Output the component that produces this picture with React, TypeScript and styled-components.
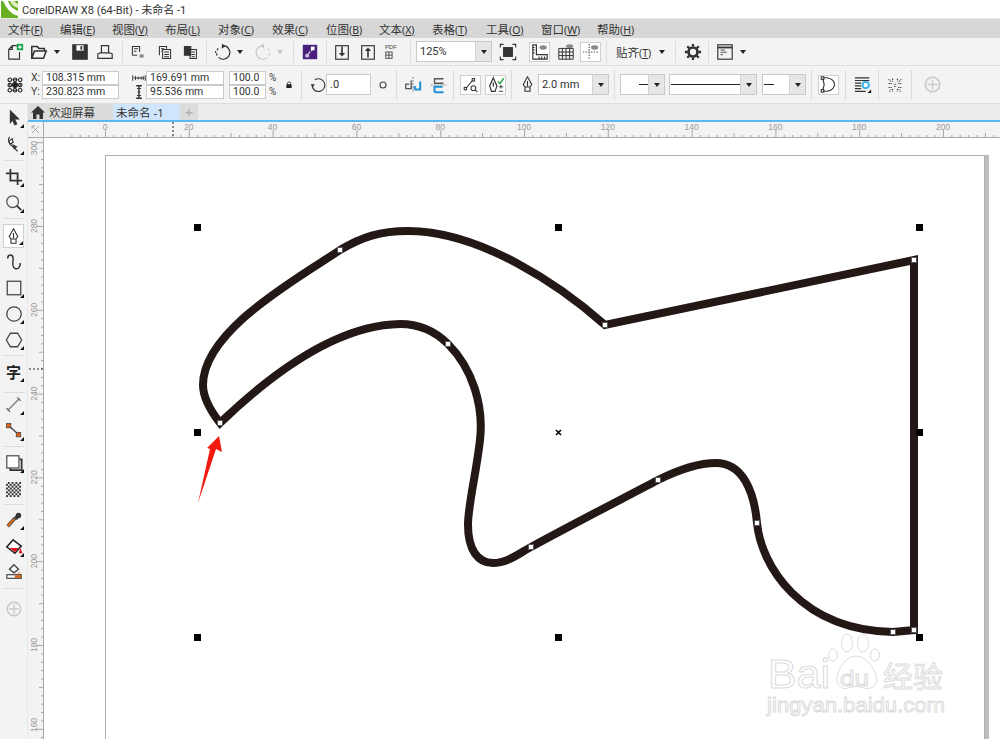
import React from "react";
import styled, { createGlobalStyle } from "styled-components";

const Global = createGlobalStyle`
  html, body { margin: 0; padding: 0; background: #fff; }
  body { font-family: "Noto Sans", "Noto Sans CJK SC", sans-serif; overflow: hidden; }
`;

const Shell = styled.div`
  width: 1000px; height: 739px; display: flex; flex-direction: column; overflow: hidden;
  font-family: "Noto Sans", "Noto Sans CJK SC", sans-serif; color: #333;
`;
const TitleBar = styled.div`
  height: 18px; display: flex; align-items: center; background: #fff; flex: none;
  font-family: Roboto, "Noto Sans CJK SC", sans-serif; font-size: 11px; color: #333; gap: 4px; padding-left: 1px;
`;
const MenuBar = styled.div`
  height: 20px; display: flex; align-items: center; background: #d7d7d7; flex: none;
  padding-left: 8px; font-size: 11.5px; color: #333; border-top: 1px solid #e9e9e9; box-sizing: border-box;
`;
const MenuItem = styled.span<{ $w: number }>`
  width: ${p => p.$w}px; flex: none; white-space: nowrap;
  u { text-decoration: underline; text-underline-offset: 1px; font-size: 10.5px; }
`;
const Bar = styled.div<{ $h: number }>`
  height: ${p => p.$h}px; flex: none; display: flex; align-items: center; background: #f3f3f3;
  border-bottom: 1px solid #dedede; box-sizing: border-box;
`;
const Slot = styled.span<{ $w: number; $l?: number; $on?: boolean }>`
  width: ${p => p.$w}px; margin-left: ${p => p.$l ?? 0}px; flex: none; display: flex; align-items: center; justify-content: center;
  height: 20px; box-sizing: border-box; background: ${p => (p.$on ? "#fff" : "transparent")};
  border: ${p => (p.$on ? "1px solid #cfcfcf" : "none")};
`;
const Sep = styled.span<{ $l: number }>`
  width: 1px; height: 22px; margin-left: ${p => p.$l}px; margin-right: 0; background: #dcdcdc; flex: none;
`;
const Tall = styled(Sep)`height: 30px;`;
const Caret = styled.span`
  width: 0; height: 0; border-left: 3.5px solid transparent; border-right: 3.5px solid transparent; border-top: 4px solid #222;
`;
const FaintCaret = styled(Caret)`border-top-color: #c4c4c4;`;
const ComboBox = styled.span<{ $w: number; $l: number }>`
  width: ${p => p.$w}px; margin-left: ${p => p.$l}px; height: 21px; flex: none; box-sizing: border-box; display: flex;
  background: #fff; border: 1px solid #c9c9c9; font-family: Roboto, sans-serif; font-size: 11px; color: #333;
`;
const ComboValue = styled.span`
  flex: 1; display: flex; align-items: center; padding-left: 3px; overflow: hidden; position: relative; white-space: nowrap;
`;
const ComboArrow = styled.span`
  width: 15px; flex: none; background: #e6e6e6; display: flex; align-items: center; justify-content: center; border-left: 1px solid #d2d2d2;
`;
const LineSample = styled.span<{ $w: number; $ml: number }>`
  display: block; height: 1.5px; width: ${p => p.$w}px; margin-left: ${p => p.$ml}px; background: #222; flex: none;
`;
const SnapText = styled.span<{ $w: number; $l: number }>`
  width: ${p => p.$w}px; margin-left: ${p => p.$l}px; flex: none; font-size: 11.5px; white-space: nowrap; color: #333;
  u { font-size: 10.5px; }
`;
const Stack = styled.span<{ $l: number }>`
  margin-left: ${p => p.$l}px; flex: none; display: flex; flex-direction: column; gap: 1px;
`;
const StackRow = styled.span`
  display: flex; align-items: center; height: 13px;
`;
const Axis = styled.span`
  width: 11px; font-family: Roboto, sans-serif; font-size: 10.5px; color: #444; flex: none; line-height: 13px;
`;
const Field = styled.span<{ $w: number }>`
  width: ${p => p.$w}px; height: 14px; box-sizing: border-box; background: #fff; border: 1px solid #cbcbcb; flex: none;
  font-family: Roboto, sans-serif; font-size: 10.5px; line-height: 12px; padding-left: 3px; color: #333; white-space: nowrap; overflow: hidden;
`;
const Percent = styled.span`
  width: 9px; font-family: Roboto, sans-serif; font-size: 10px; margin-left: 3px; color: #444; line-height: 13px; flex: none;
`;
const RotField = styled.span`
  width: 45px; height: 21px; flex: none; box-sizing: border-box; background: #fff; border: 1px solid #cbcbcb;
  font-family: Roboto, sans-serif; font-size: 11px; line-height: 19px; padding-left: 3px;
`;
const Body = styled.div`
  flex: 1; display: flex; min-height: 0;
`;
const Toolbox = styled.div`
  width: 28px; flex: none; background: #f3f3f3; display: flex; flex-direction: column; align-items: center;
  border-right: 1px solid #e8e8e8; box-sizing: border-box;
`;
const Tool = styled.span<{ $t: number; $on?: boolean }>`
  width: 21px; height: 24px; margin-top: ${p => p.$t}px; position: relative; display: flex; align-items: center; justify-content: center;
  box-sizing: border-box; background: ${p => (p.$on ? "#fff" : "transparent")}; border: ${p => (p.$on ? "1px solid #cfcfcf" : "none")};
`;
const Flyout = styled.span`
  position: absolute; right: 0; bottom: 2px; width: 0; height: 0;
  border-left: 4px solid transparent; border-bottom: 4px solid #111;
`;
const ToolSep = styled.span<{ $t: number }>`
  width: 20px; height: 1px; background: #dcdcdc; margin-top: ${p => p.$t}px; flex: none;
`;
const TextTool = styled.span`
  font-size: 15px; font-weight: 700; color: #222; line-height: 1;
`;
const Work = styled.div`
  flex: 1; display: flex; flex-direction: column; min-width: 0;
`;
const TabRow = styled.div`
  height: 16px; flex: none; display: flex; background: #ececec; border-bottom: 2px solid #5cb8ee; box-sizing: content-box; font-size: 11.5px;
`;
const Tab = styled.span<{ $w: number; $bg: string }>`
  width: ${p => p.$w}px; background: ${p => p.$bg}; display: flex; align-items: center; gap: 4px; flex: none; box-sizing: border-box; padding-left: 3px;
  white-space: nowrap; color: #333;
`;
const AddTab = styled(Tab)`
  justify-content: center; padding: 0; color: #b5b5b5; font-size: 15px; font-weight: 700;
`;
const RulerRow = styled.div`
  height: 16px; flex: none; display: flex; background: #f3f3f3;
`;
const Corner = styled.div`
  width: 16px; flex: none; border-bottom: 1px solid #aaa; border-right: 1px solid #aaa; box-sizing: border-box; display: flex; align-items: center; justify-content: center;
`;
const HRuler = styled.svg`
  flex: 1; height: 16px; display: block;
`;
const Stage = styled.div`
  flex: 1; display: flex; min-height: 0;
`;
const VRuler = styled.svg`
  width: 16px; flex: none; height: 601px; display: block; background: #f3f3f3;
`;
const Canvas = styled.div`
  flex: 1; position: relative; background: #fff; overflow: hidden;
`;
const Page = styled.div`
  position: absolute; left: 61px; top: 17px; width: 880px; height: 700px; background: #fff; box-sizing: border-box;
  border: 1px solid #b0b0b0; box-shadow: 4px 0 0 #bdbdbd;
`;
const Drawing = styled.svg`
  position: absolute; left: 0; top: 0; width: 956px; height: 601px; display: block;
`;
const RulerLabel = styled.text`
  font-family: "Liberation Sans", sans-serif; font-size: 8.5px; fill: #9a9a9a;
`;
const Mark = styled.text<{ $size: number; $w?: number }>`
  font-family: "Liberation Sans", "Noto Sans CJK SC", sans-serif; font-weight: ${p => p.$w ?? 400}; font-size: ${p => p.$size}px;
  fill: #fff; stroke: #dcdcdc; stroke-width: 1;
`;
const PdfLabel = styled.text`
  font-family: "Liberation Sans", sans-serif; font-size: 6.5px; fill: #444;
`;

type IP = { s?: number; children: React.ReactNode };
const Ic = ({ s = 18, children }: IP) => (
  <svg width={s} height={s} viewBox="0 0 20 20" fill="none" stroke="#333" strokeWidth={1.3}>{children}</svg>
);

const NewIcon = () => <Ic><path d="M3 7 L7 3 H13 M3 7 V18 H15 V10 M3 7 H7 V3" /><rect x="12" y="1" width="7" height="7" fill="#17a34a" stroke="none" /><path d="M15.5 2.5 V6.5 M13.5 4.5 H17.5" stroke="#fff" /></Ic>;
const OpenIcon = () => <Ic><path d="M2 17 V4 H8 L10 6 H16 V9 H5 L2 17 H15 L18 9 H16" strokeWidth={1.7} /></Ic>;
const SaveIcon = () => <Ic><path d="M2 2 H18 V18 H2 Z" fill="#333" /><rect x="6" y="2.5" width="8" height="6" fill="#fff" stroke="none" /><rect x="10.5" y="3.5" width="2" height="4" fill="#333" stroke="none" /></Ic>;
const PrintIcon = () => <Ic><path d="M6 11 V3 H14 V11 M2 17 V12 L5 11 H15 L18 12 V17 Z" /></Ic>;
const Doc1 = () => <Ic s={16}><path d="M3 14 V3 H12 V10 M3 14 H9" /><path d="M5 6 H10 M5 9 H8" /><rect x="12" y="13" width="5" height="4" fill="#888" stroke="none" /></Ic>;
const Doc2 = () => <Ic s={16}><path d="M3 14 V3 H12 V6 M7 7 H17 V18 H7 Z M9 10 H15 M9 13 H15 M9 16 H15 M5 6 H9 M5 9 H6" /></Ic>;
const Doc3 = () => <Ic s={16}><path d="M3 3 H11 V14 H3 Z" fill="#333" /><path d="M10 7 H18 V18 H10 Z M12 10 H16 M12 13 H16 M12 16 H16" /></Ic>;
const UndoIcon = () => <Ic><path d="M10 3 A7.5 7.5 0 1 1 5 16" /><path d="M3 14 V11.5 M3.5 8 L4.5 6 M1.5 11 L2 9" strokeWidth={1.4} /><path d="M9 0.5 L12.5 3.5 L8.5 6.5 Z" fill="#333" stroke="none" /></Ic>;
const RedoIcon = () => <Ic><g stroke="#c9c9c9"><path d="M10 3 A7.5 7.5 0 1 0 15 16" /><path d="M17 14 V11.5 M16.5 8 L15.5 6" strokeWidth={1.4} /><path d="M11 0.5 L7.5 3.5 L11.5 6.5 Z" fill="#c9c9c9" stroke="none" /></g></Ic>;
const PurpleIcon = () => <Ic><rect x="2" y="2" width="16" height="16" fill="#4a1f7c" stroke="none" /><path d="M5 15 L15 5" stroke="#fff" strokeWidth={1.2} strokeDasharray="3 1.5" /><rect x="11" y="4" width="4" height="4" fill="#fff" stroke="none" /><rect x="5" y="12" width="4" height="4" fill="#cbbbe0" stroke="none" /></Ic>;
const ImportIcon = () => <Ic><rect x="3" y="3" width="14" height="15" /><path d="M10 4 V13" strokeWidth={1.8} /><path d="M6.5 11 H13.5 L10 15 Z" fill="#333" stroke="none" /></Ic>;
const ExportIcon = () => <Ic><rect x="3" y="3" width="14" height="15" /><path d="M10 8 V16" strokeWidth={1.8} /><path d="M6.5 9 H13.5 L10 5 Z" fill="#333" stroke="none" /></Ic>;
const PdfIcon = () => <svg width="18" height="18" viewBox="0 0 20 20" fill="none" stroke="#444"><PdfLabel x="1" y="7" stroke="none">PDF</PdfLabel><rect x="2" y="10" width="7" height="7" /><path d="M5.5 10 V17 M2 13.5 H9" /></svg>;
const FullIcon = () => <Ic><rect x="4.5" y="4.5" width="11" height="11" fill="#333" stroke="none" /><path d="M1.5 5 V1.5 H5 M15 1.5 H18.5 V5 M18.5 15 V18.5 H15 M5 18.5 H1.5 V15" /></Ic>;
const RulerEye = () => <Ic><path d="M2 2 H6 V13 H18 V18 H2 Z M2 5 H4 M2 8 H4 M2 11 H4 M9 15 V18 M12 15 V18 M15 15 V18" /><ellipse cx="13.5" cy="5" rx="4" ry="2.5" fill="#888" stroke="none" /></Ic>;
const GridEye = () => <Ic><path d="M2 6 H18 V18 H2 Z M2 10 H18 M2 14 H18 M6 6 V18 M10 6 V18 M14 6 V18" strokeWidth={1.1} /><ellipse cx="14" cy="3.5" rx="4" ry="2" fill="#888" stroke="none" /></Ic>;
const GuideEye = () => <Ic><path d="M8 1 V19 M1 10 H19" strokeDasharray="1.5 1.5" stroke="#555" /><ellipse cx="14" cy="5" rx="4" ry="2.5" fill="#888" stroke="none" /></Ic>;
const GearIcon = () => <Ic><circle cx="10" cy="10" r="5" strokeWidth={3} /><path d="M10 1 V4 M10 16 V19 M1 10 H4 M16 10 H19 M3.6 3.6 L5.8 5.8 M14.2 14.2 L16.4 16.4 M3.6 16.4 L5.8 14.2 M14.2 5.8 L16.4 3.6" strokeWidth={2.6} /></Ic>;
const WindowIcon = () => <Ic><rect x="2" y="2" width="16" height="16" /><path d="M2 5 H18" strokeWidth={2} /><path d="M5 8 H10 M5 10.5 H12 M5 13 H8" stroke="#777" /></Ic>;
const AnchorIcon = () => <Ic s={16}>{[2, 10, 18].flatMap(x => [2, 10, 18].map(y => <circle key={`${x}${y}`} cx={x > 10 ? 16.5 : x < 10 ? 3.5 : 10} cy={y > 10 ? 16.5 : y < 10 ? 3.5 : 10} r={x === 10 && y === 10 ? 3 : 2.2} fill={x === 10 && y === 10 ? "#222" : "none"} stroke="#222" strokeWidth={1.4} />))}<path d="M3.5 7 V13 M16.5 7 V13 M7 3.5 H13 M7 16.5 H13" stroke="#222" strokeWidth={1.2} /></Ic>;
const WidthIcon = () => <Ic s={14}><path d="M1 6 V14 M19 6 V14 M2 10 H18" /><path d="M5 7 V13 M9 8 V12 M13 8 V12 M16 7 V13" /></Ic>;
const HeightIcon = () => <Ic s={14}><path d="M6 1 H14 M6 19 H14 M10 2 V18" strokeWidth={2} /><path d="M7 5 H13 M7 15 H13 M8 10 H12" /></Ic>;
const LockIcon = () => <svg width="6" height="8" viewBox="0 0 8 9"><rect x="0.5" y="3.5" width="7" height="5" fill="#222" /><path d="M2 4 V2 A2 1.6 0 0 1 6 2 V4" fill="none" stroke="#222" /></svg>;
const RotateIcon = () => <Ic s={16}><path d="M6 3.5 A8 8 0 1 1 2.5 10" /><path d="M1 9 H6 L3.5 13 Z" fill="#333" stroke="none" /></Ic>;
const DegreeIcon = () => <svg width="8" height="8" viewBox="0 0 8 8"><circle cx="4" cy="4" r="3" fill="none" stroke="#444" strokeWidth="1.1" /></svg>;
const MirrorH = () => <Ic><path d="M10 1 V19" stroke="#888" strokeDasharray="2 1.5" /><path d="M8 5 V14 H2 V9 H6" stroke="#555" strokeWidth={1.5} /><path d="M12 15 H18 V6 M12 15 V11" stroke="#1b8fd8" strokeWidth={2.2} /></Ic>;
const MirrorV = () => <Ic><path d="M1 10 H19" stroke="#888" strokeDasharray="2 1.5" /><path d="M15 8 H5 V3 H15" stroke="#555" strokeWidth={1.5} /><path d="M5 18 H15 M5 18 V12 H14" stroke="#1b8fd8" strokeWidth={2.2} /></Ic>;
const NodeFind = () => <Ic s={16}><path d="M3 15 L13 3" /><rect x="1.5" y="13" width="3" height="3" fill="#fff" /><rect x="11.5" y="2" width="3" height="3" fill="#fff" /><circle cx="13" cy="14" r="3" /><path d="M15 16 L18 19" /></Ic>;
const PenCheck = () => <Ic s={18}><path d="M7 2 L11 11 L9 17 H5 L3 11 Z M7 7 V12" /><path d="M12 6 L14.5 8.5 L18.5 2.5" stroke="#2aa84a" strokeWidth={1.6} /><path d="M13 12 H18 M15.5 10 V14 M13 17 H18" strokeWidth={1} /></Ic>;
const PenIcon = () => <Ic s={17}><path d="M10 1 L15 10 L13 13 H7 L5 10 Z M10 6 V12 M7 13 H13 V18 H7 Z" fill="none" /></Ic>;
const DIcon = () => <Ic s={17}><path d="M3 2 H8 C20 4 20 16 8 18 H3 L5 10 Z" /><rect x="1.5" y="1" width="3" height="3" fill="#fff" /><rect x="1.5" y="16" width="3" height="3" fill="#fff" /></Ic>;
const WrapIcon = () => <Ic><path d="M1 2 H17 M1 5 H17 M1 8 H8 M1 11 H8 M1 14 H8 M1 17 H13" /><circle cx="13" cy="10" r="3.5" stroke="#32b0ee" strokeWidth={2} fill="#fff" /><path d="M19 15 V19 H15 Z" fill="#111" stroke="none" /></Ic>;
const BreakIcon = () => <Ic><path d="M2 8 H6 M14 8 H18 M2 13 H6 M14 13 H18 M7 2 V5.5 M13 2 V5.5 M7 15 V18 M13 15 V18 M2 3 L5 5.5 M18 3 L15 5.5 M3 18 L5.5 15.5 M17 18 L14.5 15.5" strokeDasharray="1.6 1" /><path d="M8.5 9 H11.5 M8.5 12 H11.5" stroke="#777" /></Ic>;
const PlusCircle = ({ s = 17 }: { s?: number }) => <Ic s={s}><circle cx="10" cy="10" r="8.5" stroke="#c9c9c9" strokeWidth={1.8} /><path d="M10 4 V16 M4 10 H16" stroke="#c9c9c9" strokeWidth={1.6} /></Ic>;
const HomeIcon = () => <svg width="14" height="13" viewBox="0 0 14 13"><path d="M7 0 L14 6.5 H12 V13 H8.5 V8.5 H5.5 V13 H2 V6.5 H0 Z" fill="#333" /></svg>;
const LogoIcon = () => <svg width="17" height="17" viewBox="0 0 17 17"><rect width="17" height="17" fill="#6ab023" /><path d="M2 0 C6 8 10 13 17 15 V10 C12 8 9 5 7 0 Z" fill="#fff" /><path d="M9 0 C10 3 13 6 17 7 V3 C15 2 14 1 13 0 Z" fill="#dff0c8" /></svg>;

const SelectIcon = () => <Ic><path d="M6 2 L15 11 H10.5 L13 16.5 L10.8 17.5 L8.5 12 L6 15 Z" fill="#333" /></Ic>;
const ShapeIcon = () => <Ic><path d="M5 1 C2 6 6 10 9 12 L14 17" /><path d="M4 6 L8 3 L9 7 L6 9 Z" fill="#fff" /><path d="M8 9 L14 12 L10 15 Z" fill="#333" stroke="none" /></Ic>;
const CropIcon = () => <Ic><path d="M6 1 V14 H19 M1 6 H14 V19" strokeWidth={2} /></Ic>;
const ZoomIcon = () => <Ic><circle cx="8.5" cy="8.5" r="6.5" stroke="#555" strokeWidth={1.4} /><path d="M13 13 L18 18" strokeWidth={2} /></Ic>;
const FreeIcon = () => <Ic><path d="M3 6 C3 1 9 1 9 6 C9 11 7 15 11 17 C15 19 17 15 17 11" strokeWidth={1.6} /></Ic>;
const RectIcon = () => <Ic><rect x="2.5" y="2.5" width="15" height="15" stroke="#444" strokeWidth={1.4} /></Ic>;
const EllipseIcon = () => <Ic><circle cx="10" cy="10" r="8" stroke="#444" strokeWidth={1.4} /></Ic>;
const PolyIcon = () => <Ic><path d="M6 2.5 H14 L18.5 10 L14 17.5 H6 L1.5 10 Z" stroke="#444" strokeWidth={1.4} /></Ic>;
const DimIcon = () => <Ic><path d="M3 16 L16 3" stroke="#666" strokeWidth={1.3} /><path d="M1.5 13.5 L5.5 17.5 M13.5 1.5 L17.5 5.5" stroke="#666" /></Ic>;
const ConnIcon = () => <Ic><path d="M4 4 L15 14" stroke="#444" strokeWidth={1.5} /><rect x="1.5" y="1.5" width="5" height="5" fill="#d8641a" stroke="#444" strokeWidth={0.8} /><rect x="12.5" y="11.5" width="5" height="5" fill="#d8641a" stroke="#444" strokeWidth={0.8} /></Ic>;
const ShadowIcon = () => <Ic><path d="M6 15.5 V18 H18.5 V6 H16" strokeWidth={2} /><rect x="2" y="2" width="13.5" height="13.5" fill="#fff" stroke="#444" strokeWidth={1.3} /></Ic>;
const CheckIcon = () => <svg width="15" height="15" viewBox="0 0 16 16"><rect width="16" height="16" fill="#333" />{[0, 1, 2, 3, 4, 5, 6, 7].flatMap(x => [0, 1, 2, 3, 4, 5, 6, 7].map(y => ((x + y) % 2 === 0 ? <rect key={`${x}-${y}`} x={x * 2} y={y * 2} width="2" height="2" fill="#f3f3f3" /> : null)))}</svg>;
const DropperIcon = () => <Ic><path d="M3 17 L11 8" stroke="#555" strokeWidth={4} /><path d="M3 17 L10 9" stroke="#d8641a" strokeWidth={2.4} /><path d="M11 6 L14 9" stroke="#333" strokeWidth={3} /><circle cx="15" cy="5" r="3" fill="#333" stroke="none" /></Ic>;
const FillIcon = () => <Ic><path d="M9 2 L18 9 L11 17 L2 10 Z" stroke="#222" strokeWidth={1.7} fill="#fff" /><path d="M5 11 H15 L11 15.5 Z" fill="#e5101a" stroke="none" /><path d="M17 11 L19.5 17 H15.5 Z" fill="#e5101a" stroke="none" /></Ic>;
const SmartIcon = () => <Ic><path d="M10 2 L15 7 L10 11 L5 7 Z" stroke="#444" strokeWidth={1.5} fill="#fff" /><path d="M16 9 L18 12 H14 Z" fill="#f0b58a" stroke="none" /><rect x="2" y="13" width="16" height="4" fill="#fff" stroke="#444" /><rect x="11" y="13.5" width="7" height="3" fill="#d8641a" stroke="none" /></Ic>;

const Menu = ([["文件", "F", 52], ["编辑", "E", 52], ["视图", "V", 53], ["布局", "L", 53], ["对象", "C", 54], ["效果", "C", 54], ["位图", "B", 53], ["文本", "X", 53], ["表格", "T", 54], ["工具", "O", 55], ["窗口", "W", 56], ["帮助", "H", 50]] as [string, string, number][]);

const xOf = (v: number) => 105 + v * 4.19;
const yOf = (v: number) => 226 + (280 - v) * 4.19;
const range = (a: number, b: number, s: number) => { const r: number[] = []; for (let i = a; i <= b; i += s) r.push(i); return r; };

const CURVE = "M220 423 C270 375 335 325 400 324 C420 324 436 332 448 344 C472 368 484 405 480 440 C476 475 468 505 468 525 C468 550 478 563 493 563 C508 563 521 552 531 547 C575 523 620 500 658 480 C680 469 700 463 716 463 C742 463 754 490 757 523 C761 565 800 630 893 632 L914 630 L914 260 L605 325 C560 285 480 231 408 231 C380 231 362 237 340 250 C300 277 203 330 203 385 C203 398 210 410 220 423 Z";
const NODES = [[220, 423], [448, 344], [531, 547], [658, 480], [757, 523], [893, 632], [914, 630], [914, 260], [605, 325], [340, 250]];
const HANDLES = [[197, 227], [558, 227], [919, 227], [197, 432], [919, 432], [197, 637], [558, 637], [919, 637]];
const PAW = [[833, 655, 4.5, 6], [847, 643, 5.5, 9], [863, 643, 5.5, 9], [875, 655, 4.5, 6]];

const Under = ({ t, k }: { t: string; k: string }) => <>{t}<u>({k})</u></>;

export default function App() {
  return (
    <Shell>
      <Global />
      <TitleBar><LogoIcon />CorelDRAW X8 (64-Bit) - 未命名 -1</TitleBar>
      <MenuBar>
        {Menu.map(([t, k, w]) => <MenuItem key={t} $w={w}><Under t={t} k={k} /></MenuItem>)}
      </MenuBar>
      <Bar $h={28}>
        <Slot $w={20} $l={5}><NewIcon /></Slot>
        <Slot $w={20} $l={4}><OpenIcon /></Slot>
        <Slot $w={10} $l={3}><Caret /></Slot>
        <Slot $w={20} $l={8}><SaveIcon /></Slot>
        <Slot $w={20} $l={5}><PrintIcon /></Slot>
        <Sep $l={7} />
        <Slot $w={18} $l={6}><Doc1 /></Slot>
        <Slot $w={18} $l={9}><Doc2 /></Slot>
        <Slot $w={18} $l={7}><Doc3 /></Slot>
        <Sep $l={7} />
        <Slot $w={20} $l={6}><UndoIcon /></Slot>
        <Slot $w={10} $l={2}><Caret /></Slot>
        <Slot $w={20} $l={8}><RedoIcon /></Slot>
        <Slot $w={10} $l={2}><FaintCaret /></Slot>
        <Sep $l={8} />
        <Slot $w={18} $l={7}><PurpleIcon /></Slot>
        <Sep $l={7} />
        <Slot $w={18} $l={6}><ImportIcon /></Slot>
        <Slot $w={18} $l={8}><ExportIcon /></Slot>
        <Slot $w={18} $l={7}><PdfIcon /></Slot>
        <Sep $l={8} />
        <ComboBox $w={76} $l={5}><ComboValue>125%</ComboValue><ComboArrow><Caret /></ComboArrow></ComboBox>
        <Slot $w={20} $l={6}><FullIcon /></Slot>
        <Slot $w={21} $l={11} $on><RulerEye /></Slot>
        <Slot $w={20} $l={6}><GridEye /></Slot>
        <Slot $w={21} $l={4} $on><GuideEye /></Slot>
        <Sep $l={5} />
        <SnapText $w={38} $l={9}><Under t="贴齐" k="T" /></SnapText>
        <Slot $w={10} $l={3}><Caret /></Slot>
        <Sep $l={8} />
        <Slot $w={20} $l={7}><GearIcon /></Slot>
        <Sep $l={5} />
        <Slot $w={18} $l={7}><WindowIcon /></Slot>
        <Slot $w={10} $l={4}><Caret /></Slot>
      </Bar>
      <Bar $h={38}>
        <Slot $w={20} $l={5}><AnchorIcon /></Slot>
        <Stack $l={6}>
          <StackRow><Axis>X:</Axis><Field $w={77}>108.315 mm</Field></StackRow>
          <StackRow><Axis>Y:</Axis><Field $w={77}>230.823 mm</Field></StackRow>
        </Stack>
        <Stack $l={13}>
          <StackRow><Slot $w={14}><WidthIcon /></Slot><Field $w={78}>169.691 mm</Field></StackRow>
          <StackRow><Slot $w={14}><HeightIcon /></Slot><Field $w={78}>95.536 mm</Field></StackRow>
        </Stack>
        <Stack $l={5}>
          <StackRow><Field $w={37}>100.0</Field><Percent>%</Percent></StackRow>
          <StackRow><Field $w={37}>100.0</Field><Percent>%</Percent></StackRow>
        </Stack>
        <Slot $w={8} $l={7}><LockIcon /></Slot>
        <Tall $l={8} />
        <Slot $w={16} $l={8}><RotateIcon /></Slot>
        <RotField>.0</RotField>
        <Slot $w={8} $l={8}><DegreeIcon /></Slot>
        <Tall $l={9} />
        <Slot $w={18} $l={7}><MirrorH /></Slot>
        <Slot $w={18} $l={8}><MirrorV /></Slot>
        <Tall $l={5} />
        <Slot $w={21} $l={6} $on><NodeFind /></Slot>
        <Slot $w={21} $l={4} $on><PenCheck /></Slot>
        <Tall $l={5} />
        <Slot $w={17} $l={7}><PenIcon /></Slot>
        <ComboBox $w={71} $l={2}><ComboValue>2.0 mm</ComboValue><ComboArrow><Caret /></ComboArrow></ComboBox>
        <Tall $l={5} />
        <ComboBox $w={45} $l={5}><ComboValue><LineSample $w={10} $ml={15} /></ComboValue><ComboArrow><Caret /></ComboArrow></ComboBox>
        <ComboBox $w={88} $l={4}><ComboValue><LineSample $w={72} $ml={-2} /></ComboValue><ComboArrow><Caret /></ComboArrow></ComboBox>
        <ComboBox $w={44} $l={5}><ComboValue><LineSample $w={10} $ml={-2} /></ComboValue><ComboArrow><Caret /></ComboArrow></ComboBox>
        <Tall $l={5} />
        <Slot $w={21} $l={6} $on><DIcon /></Slot>
        <Tall $l={6} />
        <Slot $w={18} $l={8}><WrapIcon /></Slot>
        <Tall $l={6} />
        <Slot $w={16} $l={8}><BreakIcon /></Slot>
        <Tall $l={8} />
        <Slot $w={17} $l={12}><PlusCircle /></Slot>
      </Bar>
      <Body>
        <Toolbox>
          <Tool $t={2}><SelectIcon /><Flyout /></Tool>
          <Tool $t={3}><ShapeIcon /><Flyout /></Tool>
          <ToolSep $t={3} />
          <Tool $t={4}><CropIcon /><Flyout /></Tool>
          <Tool $t={2}><ZoomIcon /><Flyout /></Tool>
          <ToolSep $t={3} />
          <Tool $t={5} $on><PenIcon /><Flyout /></Tool>
          <Tool $t={2}><FreeIcon /></Tool>
          <Tool $t={2}><RectIcon /><Flyout /></Tool>
          <Tool $t={2}><EllipseIcon /><Flyout /></Tool>
          <Tool $t={2}><PolyIcon /><Flyout /></Tool>
          <ToolSep $t={3} />
          <Tool $t={4}><TextTool>字</TextTool><Flyout /></Tool>
          <ToolSep $t={8} />
          <Tool $t={0}><DimIcon /><Flyout /></Tool>
          <Tool $t={2}><ConnIcon /><Flyout /></Tool>
          <ToolSep $t={3} />
          <Tool $t={4}><ShadowIcon /><Flyout /></Tool>
          <Tool $t={2}><CheckIcon /></Tool>
          <ToolSep $t={3} />
          <Tool $t={3}><DropperIcon /><Flyout /></Tool>
          <Tool $t={3}><FillIcon /><Flyout /></Tool>
          <Tool $t={1}><SmartIcon /></Tool>
          <ToolSep $t={4} />
          <Tool $t={8}><PlusCircle s={16} /></Tool>
        </Toolbox>
        <Work>
          <TabRow>
            <Tab $w={85} $bg="#dcdcdc"><HomeIcon />欢迎屏幕</Tab>
            <Tab $w={67} $bg="#cfe5fb">未命名 -1</Tab>
            <AddTab $w={18} $bg="#dcdcdc">+</AddTab>
          </TabRow>
          <RulerRow>
            <Corner>
              <svg width="9" height="9" viewBox="0 0 9 9"><path d="M1 1 L8 8 M1 8 L8 1 M1 1 V4 M1 1 H4" stroke="#aaa" fill="none" /></svg>
            </Corner>
            <HRuler viewBox="44 122 956 16">
              <rect x="44" y="137" width="956" height="1" fill="#aaa" />
              {range(-8, 214, 2).map(v => (
                <rect key={v} x={xOf(v)} y={v % 20 === 0 ? 130 : v % 10 === 0 ? 133 : 135} width="1" height={v % 20 === 0 ? 7 : v % 10 === 0 ? 4 : 2} fill="#a8a8a8" />
              ))}
              {range(0, 200, 20).map(v => <RulerLabel key={v} x={xOf(v)} y="130" textAnchor="middle">{v}</RulerLabel>)}
              <path d="M173 122 V137" stroke="#222" strokeDasharray="2 2" />
            </HRuler>
          </RulerRow>
          <Stage>
            <VRuler viewBox="28 138 16 601">
              <rect x="43" y="138" width="1" height="601" fill="#aaa" />
              {range(156, 300, 2).map(v => (
                <rect key={v} x={v % 20 === 0 ? 36 : v % 10 === 0 ? 39 : 41} y={yOf(v)} width={v % 20 === 0 ? 7 : v % 10 === 0 ? 4 : 2} height="1" fill="#a8a8a8" />
              ))}
              {range(160, 300, 20).map(v => <RulerLabel key={v} transform={`translate(37 ${v === 300 ? yOf(v) + 6 : Math.min(yOf(v), 725)}) rotate(-90)`} textAnchor="middle">{v}</RulerLabel>)}
              <path d="M29 369 H43" stroke="#222" strokeDasharray="2 2" />
            </VRuler>
            <Canvas>
              <Page />
              <Drawing viewBox="44 138 956 601">
                <g>
                  {PAW.map(([x, y, rx, ry]) => <ellipse key={x} cx={x} cy={y} rx={rx} ry={ry} fill="#fff" stroke="#dcdcdc" />)}
                  <path d="M837 678 C838 668 846 656 856 656 C866 656 874 668 877 678 C878 686 870 690 864 688 C858 686 854 686 848 688 C842 690 836 686 837 678 Z" fill="#fff" stroke="#dcdcdc" />
                  <Mark $size={40} x="768" y="688" textLength="62" lengthAdjust="spacingAndGlyphs">Bai</Mark>
                  <Mark $size={22} x="840" y="686" textLength="29" lengthAdjust="spacingAndGlyphs">du</Mark>
                  <Mark $size={29} x="883" y="688" textLength="60" lengthAdjust="spacingAndGlyphs">经验</Mark>
                  <Mark $size={21} x="767" y="712" textLength="178" lengthAdjust="spacingAndGlyphs">jingyan.baidu.com</Mark>
                </g>
                <path d={CURVE} fill="none" stroke="#231815" strokeWidth="8" strokeLinejoin="miter" />
                {NODES.map(([x, y]) => <rect key={`${x}-${y}`} x={x - 2.5} y={y - 2.5} width="5" height="5" fill="#fff" stroke="#555" strokeWidth="1" shapeRendering="crispEdges" />)}
                {HANDLES.map(([x, y]) => <rect key={`${x}-${y}`} x={x - 3.5} y={y - 3.5} width="7" height="7" fill="#000" shapeRendering="crispEdges" />)}
                <path d="M556 430 L561 435 M561 430 L556 435" stroke="#000" strokeWidth="1.6" />
                <path d="M219 436 L222 452 L216 449 L198 503 L210 449 L207 448 Z" fill="#f5180f" />
              </Drawing>
            </Canvas>
          </Stage>
        </Work>
      </Body>
    </Shell>
  );
}
